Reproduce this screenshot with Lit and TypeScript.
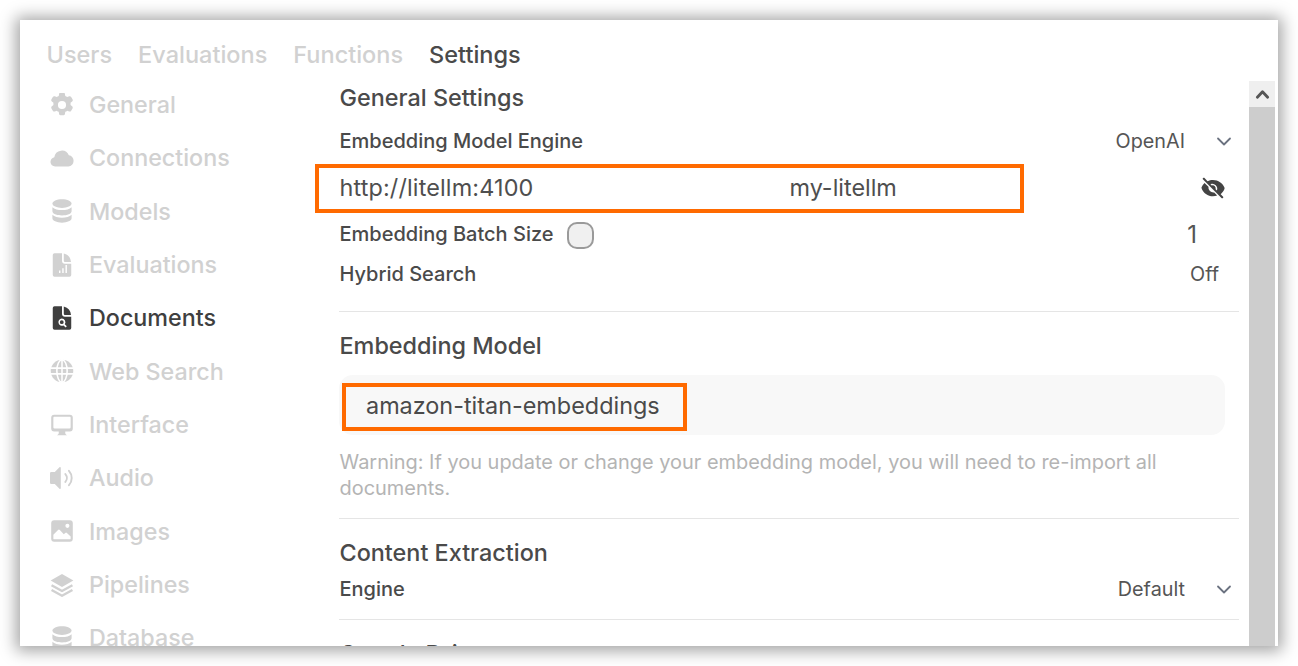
import { LitElement, html, css, svg } from "lit";
import { customElement } from "lit/decorators.js";

const icons: Record<string, unknown> = {
  gear: svg`<g transform="translate(10 10) scale(1.13) translate(-10 -10)"><path fill-rule="evenodd" d="M7.84 1.8A1.2 1.2 0 0 1 9 .8h2a1.2 1.2 0 0 1 1.16 1l.25 1.5c.53.2 1.02.48 1.46.83l1.43-.54a1.2 1.2 0 0 1 1.46.52l1 1.74a1.2 1.2 0 0 1-.3 1.52l-1.17.97a6.1 6.1 0 0 1 0 1.68l1.17.97c.45.37.57 1 .3 1.52l-1 1.74a1.2 1.2 0 0 1-1.46.52l-1.43-.54c-.44.35-.93.63-1.46.83l-.25 1.5a1.2 1.2 0 0 1-1.16 1H9a1.2 1.2 0 0 1-1.16-1l-.25-1.5a6 6 0 0 1-1.46-.83l-1.43.54a1.2 1.2 0 0 1-1.46-.52l-1-1.74a1.2 1.2 0 0 1 .3-1.52l1.17-.97a6.1 6.1 0 0 1 0-1.68L2.54 7.37a1.2 1.2 0 0 1-.3-1.52l1-1.74a1.2 1.2 0 0 1 1.46-.52l1.43.54c.44-.35.93-.63 1.46-.83l.25-1.5ZM10 13a3 3 0 1 0 0-6 3 3 0 0 0 0 6Z"/></g>`,
  cloud: svg`<path d="M.4 13.600A4.300 4.300 0 0 1 3.600 9.300a6.300 6.300 0 0 1 12.100-1.500 4.300 4.300 0 0 1 3.900 4.700 4.300 4.300 0 0 1-4.300 4.500H4.500A4 4 0 0 1 .4 13.600Z"/>`,
  db: svg`<path d="M10 .2c4.400 0 8 1.600 8 3.600 0 2-3.600 3.600-8 3.600S2 5.800 2 3.800C2 1.800 5.600.2 10 .2Z"/><path d="M2 6.800c1.600 1.600 4.600 2.400 8 2.400s6.400-.8 8-2.400v3.400c0 2-3.600 3.500-8 3.500s-8-1.500-8-3.500Z"/><path d="M2 13.200c1.600 1.600 4.600 2.400 8 2.400s6.400-.8 8-2.400v2.900c0 2-3.600 3.600-8 3.600s-8-1.600-8-3.600Z"/>`,
  chart: svg`<path fill-rule="evenodd" d="M3.800.2A1.500 1.500 0 0 0 2.300 1.700v16.600a1.500 1.500 0 0 0 1.500 1.500h12.400a1.500 1.500 0 0 0 1.500-1.500V9h-5.200A2.500 2.500 0 0 1 10 6.500V.2H3.800ZM7.500 14.500h1.200v2.200H7.500v-2.200Zm2.700-1.800h1.200v4h-1.200v-4Zm2.700-2.600h1.200v6.600h-1.200v-6.600Z"/><path d="M11.500.4v6.100a1 1 0 0 0 1 1h5a8 8 0 0 0-6-7.100Z"/>`,
  docSearch: svg`<path fill-rule="evenodd" d="M3.800.2A1.500 1.500 0 0 0 2.300 1.700v16.600a1.500 1.500 0 0 0 1.500 1.500h12.400a1.500 1.500 0 0 0 1.500-1.500V9h-5.200A2.500 2.500 0 0 1 10 6.500V.2H3.800ZM9.800 10.500a3 3 0 0 1 2.500 4.700l1.700 1.700-1 1-1.700-1.700a3 3 0 1 1-1.500-5.700Zm0 1.400a1.600 1.600 0 1 0 0 3.200 1.600 1.600 0 0 0 0-3.200Z"/><path d="M11.500.4v6.100a1 1 0 0 0 1 1h5a8 8 0 0 0-6-7.100Z"/>`,
  globe: svg`<circle cx="10" cy="10" r="9.400"/><g fill="none" stroke="#fff" stroke-width="1.300"><path d="M.6 7.600h18.800M.6 12.400h18.800M10 .6v18.800"/><ellipse cx="10" cy="10" rx="4.300" ry="9.400"/></g>`,
  monitor: svg`<path fill-rule="evenodd" d="M3.500 1.400A2.500 2.500 0 0 0 1 3.900v9A2.500 2.500 0 0 0 3.500 15.400h3.800v1.300c0 .5-.2.900-.6 1.200l-.9.700h8.400l-.9-.7c-.4-.3-.6-.7-.6-1.200v-1.300h3.800a2.500 2.500 0 0 0 2.500-2.500v-9a2.500 2.500 0 0 0-2.500-2.500H3.500Zm0 1.800h13a.7.7 0 0 1 .7.7v8a1 1 0 0 1-1 1H3.800a1 1 0 0 1-1-1v-8a.7.7 0 0 1 .7-.7Z"/>`,
  speaker: svg`<path d="M9 1.500v17c0 .6-.7.900-1.100.5L4 15h-3a1 1 0 0 1-1-1V6a1 1 0 0 1 1-1h3l3.900-4c.4-.4 1.100-.1 1.100.5Z"/><path fill="none" stroke="currentColor" stroke-width="1.600" stroke-linecap="round" d="M12.800 6.700a5 5 0 0 1 0 6.600M15.800 4a9 9 0 0 1 0 12"/>`,
  image: svg`<path fill-rule="evenodd" d="M3.500 1A2.500 2.500 0 0 0 1 3.500v13A2.500 2.500 0 0 0 3.500 19h13a2.500 2.500 0 0 0 2.500-2.500v-13A2.500 2.500 0 0 0 16.500 1h-13Zm11 3a1.700 1.700 0 1 1 0 3.400 1.700 1.700 0 0 1 0-3.400ZM2.800 16.200v-3l3.900-4a1 1 0 0 1 1.500 0l3.300 3.500 1.200-1.100a1 1 0 0 1 1.400 0l3.100 2.900v1.700a.7.700 0 0 1-.7.700H3.500a.7.700 0 0 1-.7-.7Z"/>`,
  layers: svg`<path d="M10 .8 19.500 6.200 10 11.600.5 6.200Z"/><path fill="none" stroke="currentColor" stroke-width="2" stroke-linejoin="round" d="M1.300 10.200 10 15 18.700 10.200M1.300 14.200 10 19 18.700 14.200"/>`,
};

const nav: [string, string, boolean?][] = [
  ["General", "gear"],
  ["Connections", "cloud"],
  ["Models", "db"],
  ["Evaluations", "chart"],
  ["Documents", "docSearch", true],
  ["Web Search", "globe"],
  ["Interface", "monitor"],
  ["Audio", "speaker"],
  ["Images", "image"],
  ["Pipelines", "layers"],
  ["Database", "db"],
];

const chevron = html`<svg class="chev" viewBox="0 0 16 16" fill="none" stroke="#6b7280" stroke-width="1.800" stroke-linecap="round" stroke-linejoin="round"><path d="M2 5.500 8 11.500l6-6"/></svg>`;

@customElement("app-root")
export class AppRoot extends LitElement {
  static styles = css`
    :host { display: block; width: 1298px; height: 666px; background: #fff; font-family: Inter, "Liberation Sans", sans-serif; color: #4b4b4b; overflow: hidden; }
    .frame { padding: 20px; box-sizing: border-box; width: 1298px; height: 666px; }
    .card { position: relative; width: 1258px; height: 626px; background: #fff; overflow: hidden; }
    .shadow { width: 1258px; height: 626px; box-shadow: 0 1px 15px 4px rgba(0,0,0,.36); }
    .tabs { display: flex; gap: 26px; padding: 21px 0 0 26.500px; height: 61px; box-sizing: border-box; font-size: 23.500px; line-height: 28px; color: #d1d1d1; font-weight: 500; }
    .tabs .on { color: #4a4a4a; }
    .body { display: flex; height: 565px; padding-right: 3px; }
    .side { width: 319px; flex: none; padding: 0 0 0 30px; box-sizing: border-box; display: flex; flex-direction: column; margin-top: -3px; }
    .nav { display: flex; align-items: center; gap: 15px; height: 53.340px; flex: none; font-size: 23.300px; font-weight: 500; color: #d1d1d1; }
    .nav.on { color: #3f3f3f; }
    .nav svg { width: 24px; height: 24px; flex: none; fill: currentColor; }
    .main { flex: 1; min-width: 0; padding-right: 10px; overflow: hidden; }
    .title { font-size: 23.400px; font-weight: 500; line-height: 28px; color: #4a4a4a; padding-left: .5px; }
    .row { display: flex; align-items: center; justify-content: space-between; font-size: 20px; font-weight: 500; color: #4a4a4a; height: 30px; padding-left: .5px; }
    .val { font-size: 19.800px; font-weight: 400; color: #555; display: flex; align-items: center; }
    .chev { width: 16px; height: 16px; margin: 0 7px 0 31px; }
    .conn { display: flex; align-items: center; height: 47px; font-size: 23.400px; font-weight: 400; color: #4f4f4f; padding-left: .5px; }
    .conn .u { width: 450px; letter-spacing: .15px; }
    .conn .eye { width: 26px; height: 26px; margin-left: auto; margin-right: 13px; fill: #444; }
    .tg { display: flex; align-items: center; }
    .toggle { display: block; width: 27px; height: 27px; border: 2px solid #9a9a9a; border-radius: 10px; background: #f0f0f0; box-sizing: border-box; margin: 2px 0 0 13px; }
    .one { margin-right: 42px; font-size: 24px; }
    .off { margin-right: 20px; }
    hr { border: 0; border-top: 1px solid #e5e5e5; margin: 0; }
    .input { width: 886px; height: 60px; border-radius: 14px; background: #f8f8f8; display: flex; align-items: center; padding-left: 27px; box-sizing: border-box; font-size: 23.400px; color: #4a4a4a; }
    .warn { font-size: 19.950px; line-height: 26px; color: #b4b4b4; width: 886px; padding-left: .5px; box-sizing: border-box; }
    .scroll { width: 26px; flex: none; background: #cdcdcd; }
    .up { height: 26px; background: #efefef; display: flex; align-items: center; justify-content: center; }
    .up svg { width: 15px; height: 15px; }
    .mark { position: absolute; border: 4px solid #ff6a00; box-sizing: border-box; pointer-events: none; }
    .m1 { left: 295px; top: 144px; width: 709px; height: 49px; }
    .m2 { left: 322px; top: 363px; width: 345px; height: 48px; }
    .mt3 { margin-top: 3px; } .mt7 { margin-top: 7px; } .mt8 { margin-top: 8px; } .mt10 { margin-top: 10px; } .mt14 { margin-top: 14px; }
    .mt15 { margin-top: 15px; } .mt17 { margin-top: 17px; } .mt20 { margin-top: 20px; } .mt22 { margin-top: 22px; }
  `;

  render() {
    return html`<div class="frame"><div class="shadow"><div class="card">
      <div class="tabs"><span>Users</span><span>Evaluations</span><span>Functions</span><span class="on">Settings</span></div>
      <div class="body">
        <div class="side">
          ${nav.map(([label, ic, on]) => html`<div class="nav ${on ? "on" : ""}"><svg viewBox="0 0 20 20">${icons[ic]}</svg><span>${label}</span></div>`)}
        </div>
        <div class="main">
          <div class="title mt3">General Settings</div>
          <div class="row mt14">Embedding Model Engine<span class="val">OpenAI${chevron}</span></div>
          <div class="conn mt8"><span class="u">http://litellm:4100</span><span>my-litellm</span>
            <svg class="eye" viewBox="0 0 20 20"><path fill-rule="evenodd" d="M3.300 2.200a.8.800 0 0 0-1.100 1.100l14.500 14.500a.8.800 0 0 0 1.100-1.100l-1.900-1.900c1.300-1.100 2.300-2.500 2.900-4a1.800 1.800 0 0 0 0-1.200C17.500 6.300 14 3.800 10 3.800c-1.500 0-2.900.3-4.200 1L3.300 2.200ZM8 7l1 1a2.400 2.400 0 0 1 3 3l1 1A3.900 3.900 0 0 0 8 7Z"/><path d="M1.200 9.400c.5-1.300 1.300-2.400 2.300-3.300l3 3a3.900 3.900 0 0 0 4.400 4.400l2.300 2.300c-1 .4-2.100.6-3.200.6-4 0-7.500-2.500-8.800-6.200a1.800 1.800 0 0 1 0-.8Z"/></svg></div>
          <div class="row mt8"><span class="tg">Embedding Batch Size<span class="toggle"></span></span><span class="val one">1</span></div>
          <div class="row mt10">Hybrid Search<span class="val off">Off</span></div>
          <hr class="mt22" />
          <div class="title mt20">Embedding Model</div>
          <div class="input mt15">amazon-titan-embeddings</div>
          <div class="warn mt14">Warning: If you update or change your embedding model, you will need to re-import all documents.</div>
          <hr class="mt17" />
          <div class="title mt20">Content Extraction</div>
          <div class="row mt7">Engine<span class="val">Default${chevron}</span></div>
          <hr class="mt15" />
          <div class="title mt20">Google Drive</div>
        </div>
        <div class="scroll"><div class="up"><svg viewBox="0 0 16 16" fill="none" stroke="#555" stroke-width="3" stroke-linecap="round" stroke-linejoin="round"><path d="M2.500 11 8 5l5.500 6"/></svg></div></div>
      </div>
      <div class="mark m1"></div>
      <div class="mark m2"></div>
    </div></div></div>`;
  }
}
